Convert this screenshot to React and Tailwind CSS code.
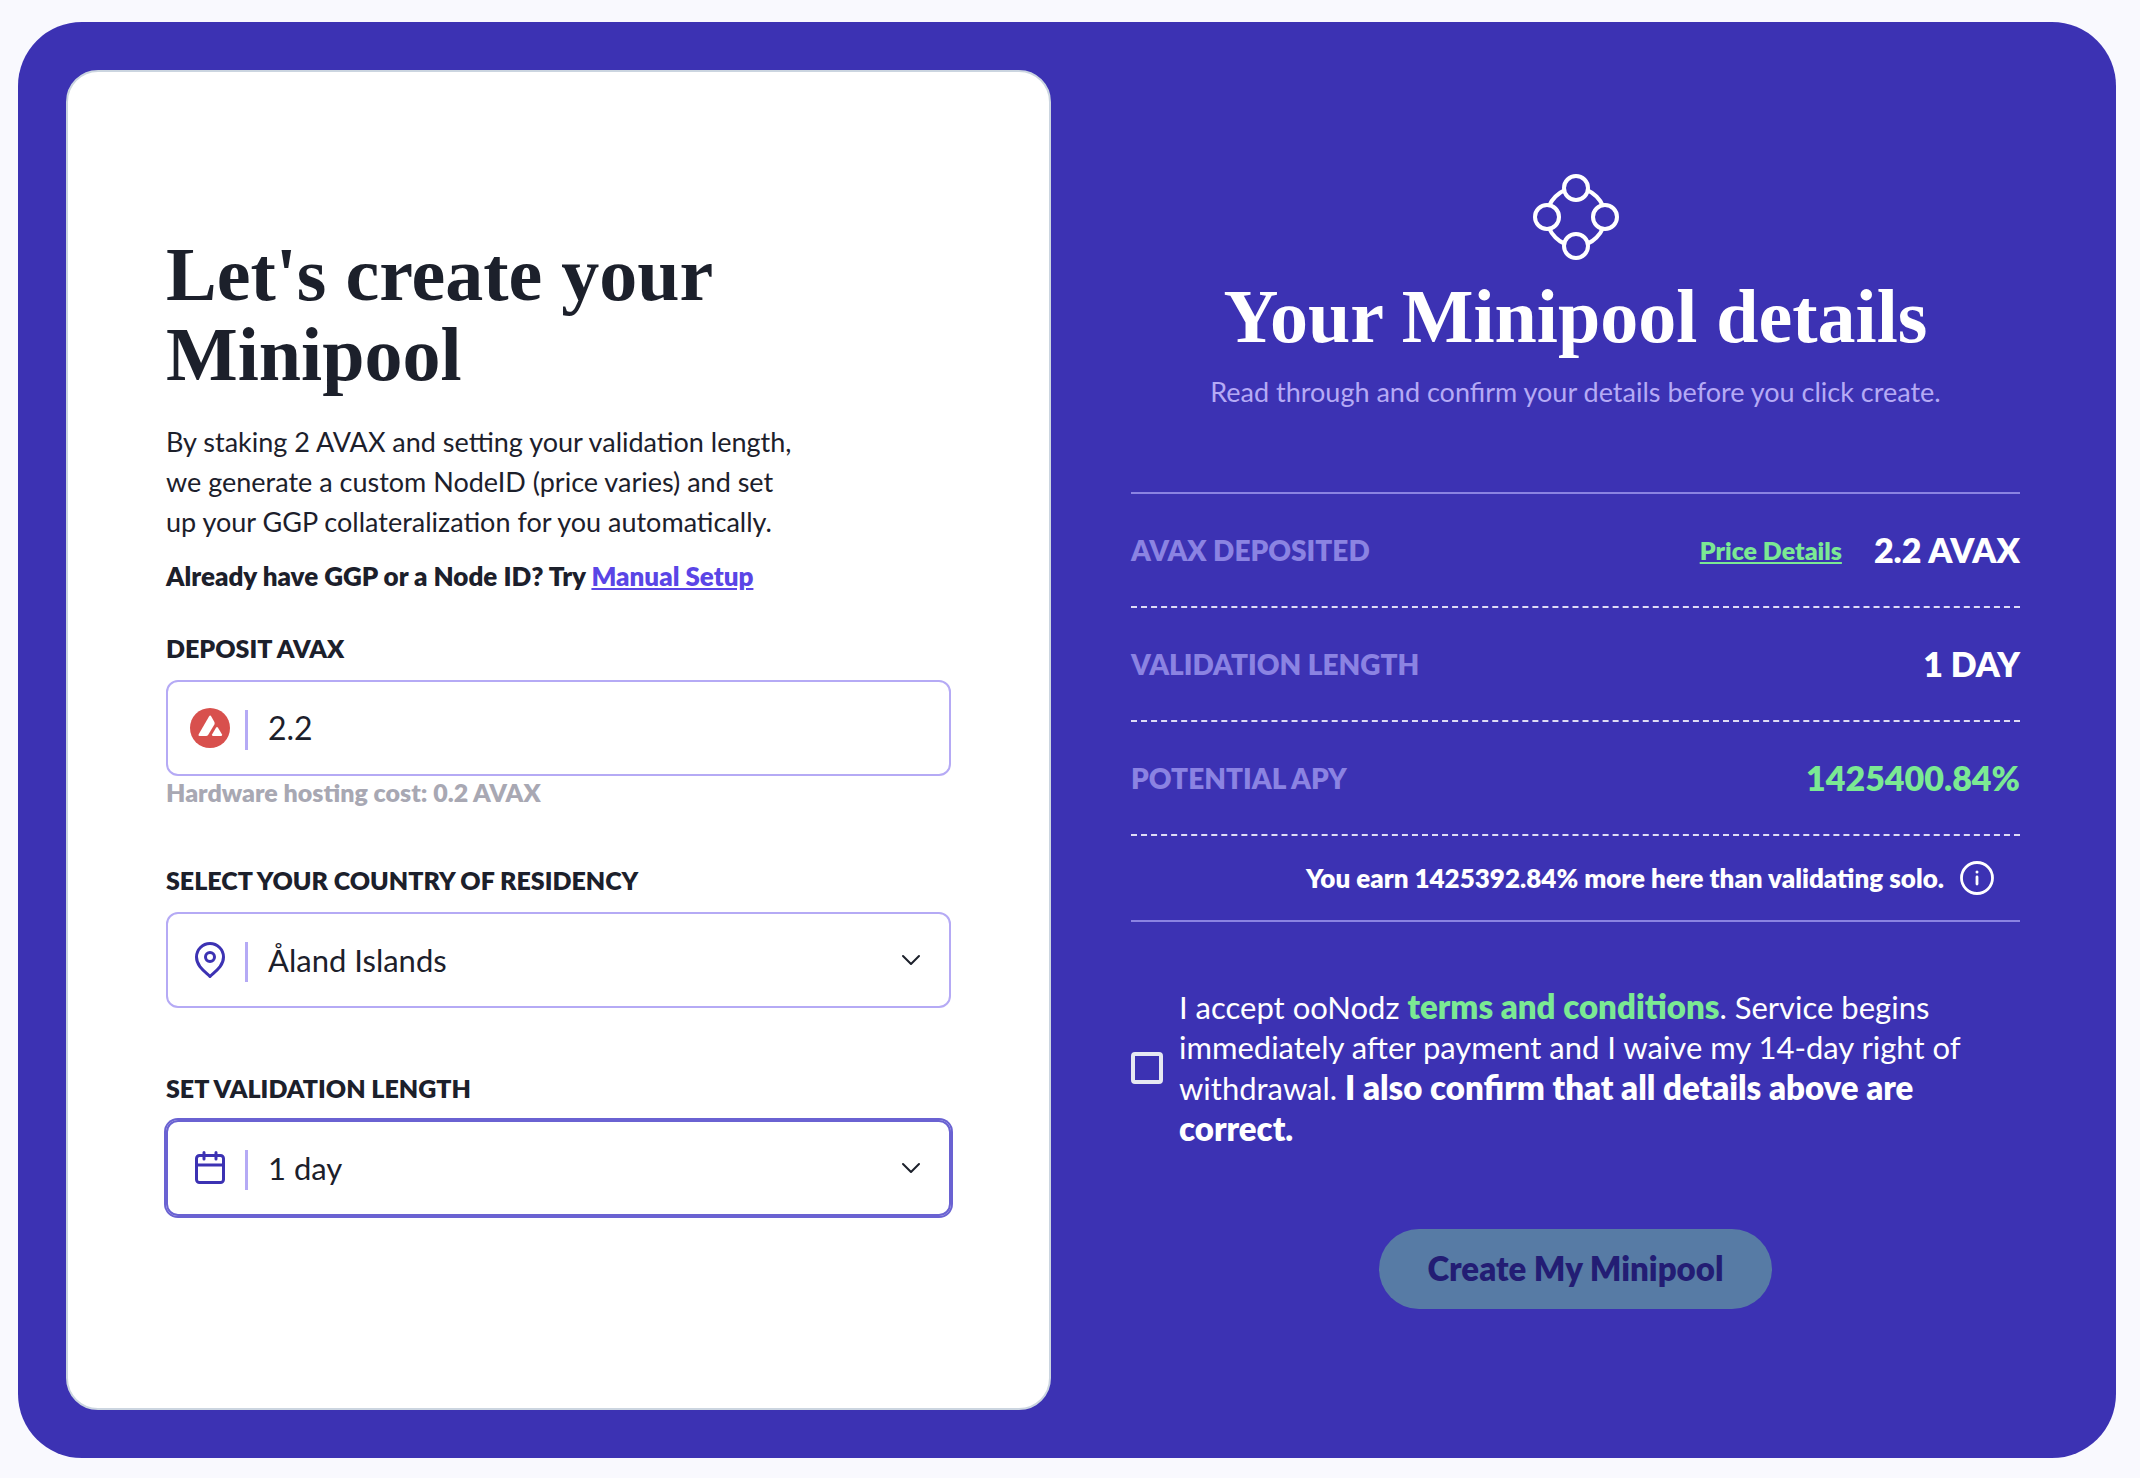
import React from "react";

function Avax() {
  return (
    <svg viewBox="0 0 40 40" className="size-10" aria-hidden="true">
      <circle cx="20" cy="20" r="20" fill="#d8504d" />
      <path d="M19 8.400q1.200-1.600 2.300 0l3.100 5.600q.6 1.300 0 2.600l-6.300 10.400q-.7 1-2 1H9.500q-1.600-.2-.8-1.800z" fill="#fff" />
      <path d="M26 19.800q1-1.400 2 0l3.900 6.400q.8 1.500-.8 1.800h-8q-1.700-.2-.9-1.800z" fill="#fff" />
    </svg>
  );
}

function Pin() {
  return (
    <svg viewBox="0 0 40 40" className="size-10 text-[#3c32b3]" fill="none" stroke="currentColor" strokeWidth="3" strokeLinecap="round" strokeLinejoin="round" aria-hidden="true">
      <path d="M20 36.500C16.500 32.500 6.500 27 6.500 17a13.500 13.500 0 0 1 27 0c0 10-10 15.500-13.500 19.500z" />
      <circle cx="20" cy="17" r="4.500" />
    </svg>
  );
}

function Calendar() {
  return (
    <svg viewBox="0 0 40 40" className="size-10 text-[#3c32b3]" fill="none" stroke="currentColor" strokeWidth="3" strokeLinecap="round" strokeLinejoin="round" aria-hidden="true">
      <rect x="6.500" y="7.500" width="27" height="27" rx="3" />
      <path d="M6.500 17h27M14 4.500v6.500M26 4.500v6.500" />
    </svg>
  );
}

function Chevron() {
  return (
    <svg viewBox="0 0 20 12" className="pointer-events-none h-3 w-5 text-[#1c202b]" fill="none" stroke="currentColor" strokeWidth="2" strokeLinecap="round" strokeLinejoin="round" aria-hidden="true">
      <path d="M2 2l8 8 8-8" />
    </svg>
  );
}

function PoolIcon() {
  return (
    <svg viewBox="0 0 86 86" className="size-[86px]" fill="none" stroke="#fff" strokeWidth="4" aria-hidden="true">
      <circle cx="43" cy="43" r="29" />
      <g fill="#3c32b3">
        <circle cx="43" cy="14" r="12" />
        <circle cx="72" cy="43" r="12" />
        <circle cx="43" cy="72" r="12" />
        <circle cx="14" cy="43" r="12" />
      </g>
    </svg>
  );
}

function InfoIcon() {
  return (
    <svg viewBox="0 0 34 34" className="size-[34px]" fill="none" stroke="#fff" strokeWidth="2.800" strokeLinecap="round" aria-hidden="true">
      <circle cx="17" cy="17" r="15.500" />
      <path d="M17 16v7" />
      <path d="M17 11v.1" strokeWidth="3" />
    </svg>
  );
}

function Field({ id, label, icon, focused, children, chevron }) {
  return (
    <div>
      <label htmlFor={id} className="block text-[25px] leading-9 font-extrabold uppercase">{label}</label>
      <div className={focused
        ? "mt-[14px] flex h-24 items-center rounded-xl border-2 border-[#6a62d2] pr-7 pl-[22px] ring-2 ring-[#6a62d2]"
        : "mt-[14px] flex h-24 items-center rounded-xl border-2 border-[#b5aaf5] pr-7 pl-[22px]"}>
        {icon}
        <span className="mt-1 mr-5 ml-[15px] h-10 w-[3px] bg-[#b5aaf5]" />
        {children}
        {chevron && <Chevron />}
      </div>
    </div>
  );
}

function Row({ label, children }) {
  return (
    <div className="flex h-[114px] items-center justify-between border-b-2 border-dashed border-[#dedcf6]">
      <dt className="text-[28px] leading-10 font-extrabold text-[#8b83e2] uppercase">{label}</dt>
      <dd className="flex items-center gap-8 text-[34px] leading-10 font-extrabold">{children}</dd>
    </div>
  );
}

export default function App() {
  return (
    <div className="min-h-screen bg-[#f9f9fe] pt-[22px] pr-6 pb-5 pl-[18px] font-[Lato,sans-serif]">
      <main className="grid grid-cols-2 gap-8 rounded-[64px] bg-[#3c32b3] p-12">
        <section className="rounded-[32px] border-2 border-[#cbd5e0] bg-white px-[98px] pt-[162px] pb-48 text-[#1c202b]">
          <h1 className="max-w-[640px] font-['Liberation_Serif',serif] text-[76px] leading-20 font-bold">Let's create your Minipool</h1>
          <p className="mt-7 max-w-[640px] text-[27px] leading-10">
            By staking 2 AVAX and setting your validation length, we generate a custom NodeID (price varies) and set up your GGP collateralization for you automatically.
          </p>
          <p className="mt-4 text-[26px] leading-9 font-extrabold">
            Already have GGP or a Node ID? Try <a href="#manual" className="text-[#5a45e6] underline">Manual Setup</a>
          </p>
          <form className="mt-9">
            <Field id="deposit" label="Deposit AVAX" icon={<Avax />}>
              <input id="deposit" type="text" defaultValue="2.2" className="min-w-0 flex-1 bg-transparent text-[32px] outline-none" />
            </Field>
            <p className="mb-[54px] text-[25px] leading-8 font-extrabold text-[#a8a8b3]">Hardware hosting cost: 0.2 AVAX</p>
            <Field id="country" label="Select your country of residency" icon={<Pin />} chevron>
              <select id="country" className="min-w-0 flex-1 appearance-none bg-transparent text-[31px] outline-none">
                <option>Åland Islands</option>
              </select>
            </Field>
            <div className="h-[62px]" />
            <Field id="length" label="Set validation length" icon={<Calendar />} focused chevron>
              <select id="length" className="min-w-0 flex-1 appearance-none bg-transparent text-[31px] outline-none">
                <option>1 day</option>
              </select>
            </Field>
          </form>
        </section>

        <section className="flex flex-col items-center px-12 pt-[104px] text-white">
          <PoolIcon />
          <h2 className="mt-4 text-center font-['Liberation_Serif',serif] text-[76px] leading-20 font-bold">Your Minipool details</h2>
          <p className="mt-4 text-[27px] leading-10 text-[#b5aaf5]">Read through and confirm your details before you click create.</p>
          <dl className="mt-20 w-full border-y-2 border-[#8b83e2]">
            <Row label="AVAX deposited">
              <a href="#price" className="text-[25px] text-[#7be993] underline">Price Details</a>
              <span>2.2 AVAX</span>
            </Row>
            <Row label="Validation length">1 DAY</Row>
            <Row label="Potential APY"><span className="text-[#7be993]">1425400.84%</span></Row>
            <div className="flex h-[84px] items-center justify-end gap-4 pr-[26px]">
              <span className="text-[26px] font-extrabold">You earn 1425392.84% more here than validating solo.</span>
              <button type="button" aria-label="More information"><InfoIcon /></button>
            </div>
          </dl>
          <div className="mt-16 flex w-full items-center gap-4">
            <input id="accept" type="checkbox" className="size-8 shrink-0 appearance-none rounded-sm border-4 border-[#e6e8f2]" />
            <label htmlFor="accept" className="pr-12 text-[31px] leading-10">
              I accept ooNodz <a href="#terms" className="text-[33px] leading-10 font-extrabold text-[#7be993]">terms and conditions</a>. Service begins immediately after payment and I waive my 14-day right of withdrawal. <strong className="text-[33px] leading-10 font-extrabold">I also confirm that all details above are correct.</strong>
            </label>
          </div>
          <button type="button" disabled className="mt-20 h-20 rounded-full bg-[#577ba5] px-12 text-[33px] font-extrabold text-[#231d74]">Create My Minipool</button>
        </section>
      </main>
    </div>
  );
}
